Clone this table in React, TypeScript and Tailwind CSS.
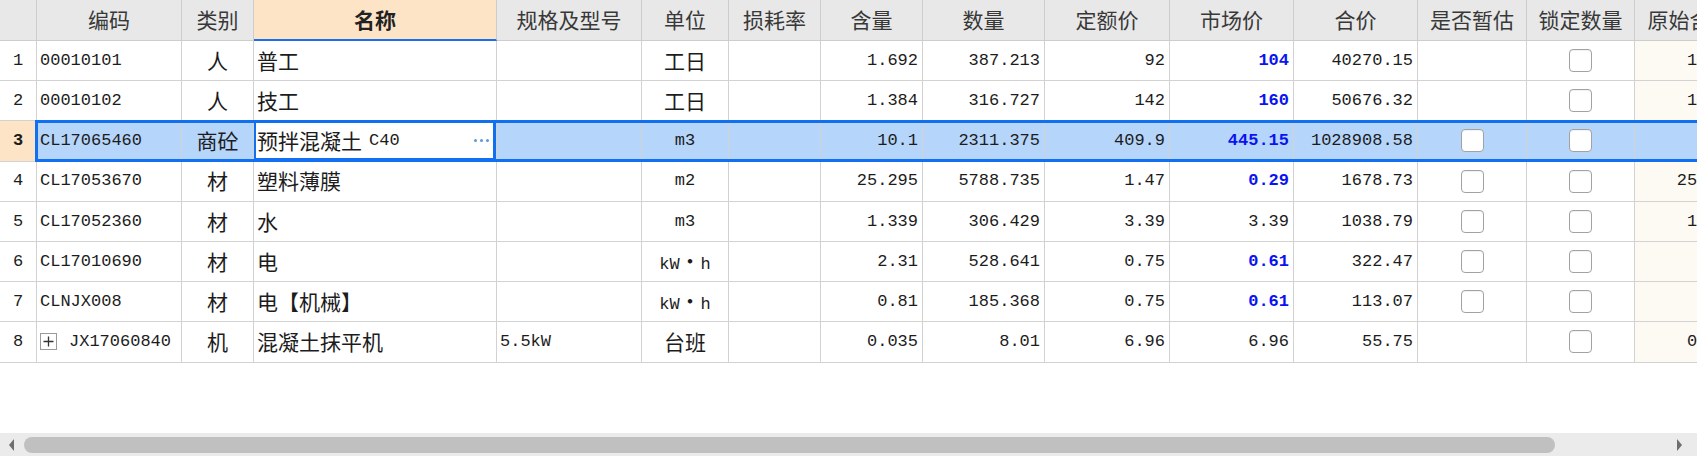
import type { ReactNode } from "react";

const MONO = "font-['Liberation_Mono','Noto_Sans_CJK_SC',monospace] text-[17px]";
const CJK = "font-['Noto_Sans_CJK_SC','Noto_Sans',sans-serif] text-[21px]";

type Col = {
  key: string;
  label: string;
  width: string;
  align: string;
  extra?: string;
};

const cols: Col[] = [
  { key: "code", label: "编码", width: "w-[145px]", align: "justify-start pl-[3px]" },
  { key: "type", label: "类别", width: "w-[72px]", align: "justify-center" },
  { key: "name", label: "名称", width: "w-[243px]", align: "justify-start pl-[3px]" },
  { key: "spec", label: "规格及型号", width: "w-[145px]", align: "justify-start pl-[3px]" },
  { key: "unit", label: "单位", width: "w-[87px]", align: "justify-center" },
  { key: "loss", label: "损耗率", width: "w-[92px]", align: "justify-end pr-[4px]" },
  { key: "qty", label: "含量", width: "w-[102px]", align: "justify-end pr-[4px]" },
  { key: "amount", label: "数量", width: "w-[122px]", align: "justify-end pr-[4px]" },
  { key: "quota", label: "定额价", width: "w-[125px]", align: "justify-end pr-[4px]" },
  { key: "market", label: "市场价", width: "w-[124px]", align: "justify-end pr-[4px]" },
  { key: "total", label: "合价", width: "w-[124px]", align: "justify-end pr-[4px]" },
  { key: "est", label: "是否暂估", width: "w-[109px]", align: "justify-center" },
  { key: "lock", label: "锁定数量", width: "w-[108px]", align: "justify-center" },
  { key: "orig", label: "原始含量", width: "w-[110px]", align: "justify-end pr-[6px]", extra: "bg-[#fdf9f3]" },
];

type Row = {
  code: string;
  expand?: boolean;
  type: string;
  name: ReactNode;
  spec: ReactNode;
  unit: ReactNode;
  qty: string;
  amount: string;
  quota: string;
  market: string;
  marketChanged: boolean;
  total: string;
  est: boolean;
};

const kwh = (
  <span className={MONO}>
    kW<span className={CJK}>・</span>h
  </span>
);

const rows: Row[] = [
  { code: "00010101", type: "人", name: "普工", spec: "", unit: "工日", qty: "1.692", amount: "387.213", quota: "92", market: "104", marketChanged: true, total: "40270.15", est: false },
  { code: "00010102", type: "人", name: "技工", spec: "", unit: "工日", qty: "1.384", amount: "316.727", quota: "142", market: "160", marketChanged: true, total: "50676.32", est: false },
  {
    code: "CL17065460", type: "商砼",
    name: (
      <span className="flex items-center">
        <span className={CJK}>预拌混凝土</span>
        <span className={`${MONO} ml-[7px]`}>C40</span>
      </span>
    ),
    spec: "", unit: <span className={MONO}>m3</span>, qty: "10.1", amount: "2311.375", quota: "409.9", market: "445.15", marketChanged: true, total: "1028908.58", est: true,
  },
  { code: "CL17053670", type: "材", name: "塑料薄膜", spec: "", unit: <span className={MONO}>m2</span>, qty: "25.295", amount: "5788.735", quota: "1.47", market: "0.29", marketChanged: true, total: "1678.73", est: true },
  { code: "CL17052360", type: "材", name: "水", spec: "", unit: <span className={MONO}>m3</span>, qty: "1.339", amount: "306.429", quota: "3.39", market: "3.39", marketChanged: false, total: "1038.79", est: true },
  { code: "CL17010690", type: "材", name: "电", spec: "", unit: kwh, qty: "2.31", amount: "528.641", quota: "0.75", market: "0.61", marketChanged: true, total: "322.47", est: true },
  { code: "CLNJX008", type: "材", name: "电【机械】", spec: "", unit: kwh, qty: "0.81", amount: "185.368", quota: "0.75", market: "0.61", marketChanged: true, total: "113.07", est: true },
  { code: "JX17060840", expand: true, type: "机", name: "混凝土抹平机", spec: <span className={MONO}>5.5kW</span>, unit: "台班", qty: "0.035", amount: "8.01", quota: "6.96", market: "6.96", marketChanged: false, total: "55.75", est: false },
];

function Checkbox() {
  return <div className="h-[23px] w-[23px] rounded-[4px] border border-[#a2a2a2] bg-white shadow-[inset_0_1px_1px_rgba(0,0,0,0.06)]" />;
}

function ExpandBox() {
  return (
    <svg width="17" height="17" viewBox="0 0 17 17" className="mr-[12px] shrink-0">
      <rect x="0.5" y="0.5" width="16" height="16" fill="#fff" stroke="#9a9a9a" />
      <path d="M3.5 8.5h10M8.5 3.5v10" stroke="#333" strokeWidth="1.3" />
    </svg>
  );
}

function text(v: ReactNode) {
  if (typeof v !== "string") return v;
  if (/[\u3000-\u9fff\uff00-\uffef]/.test(v)) return <span className={CJK}>{v}</span>;
  return <span className={MONO}>{v}</span>;
}

function cellContent(row: Row, key: string): ReactNode {
  switch (key) {
    case "code":
      return (
        <>
          {row.expand && <ExpandBox />}
          <span className={MONO}>{row.code}</span>
        </>
      );
    case "type":
      return text(row.type);
    case "name":
      return text(row.name);
    case "spec":
      return text(row.spec);
    case "unit":
      return text(row.unit);
    case "loss":
      return null;
    case "qty":
      return text(row.qty);
    case "amount":
      return text(row.amount);
    case "quota":
      return text(row.quota);
    case "market":
      return row.marketChanged ? (
        <span className={`${MONO} font-bold text-[#0a14f0]`}>{row.market}</span>
      ) : (
        text(row.market)
      );
    case "total":
      return text(row.total);
    case "est":
      return row.est ? <Checkbox /> : null;
    case "lock":
      return <Checkbox />;
    case "orig":
      return text(row.qty);
  }
  return null;
}

export default function App() {
  const selected = 2;

  return (
    <div className="flex h-[456px] w-[1697px] flex-col overflow-hidden bg-white text-[#1c1c1c]">
      <div className="flex h-[41px] shrink-0">
        <div className="h-full w-[37px] shrink-0 border-r border-b border-[#cdcdcd] bg-[#e8e8e8]" />
        {cols.map((c) =>
          c.key === "name" ? (
            <div
              key={c.key}
              className={`${c.width} flex h-full shrink-0 items-center justify-center border-r border-b-2 border-r-[#cdcdcd] border-b-[#1a6ff0] bg-[#fde4c6] font-['Noto_Sans_CJK_SC',sans-serif] text-[21px] font-bold text-[#222]`}
            >
              {c.label}
            </div>
          ) : (
            <div
              key={c.key}
              className={`${c.width} flex h-full shrink-0 items-center justify-center overflow-hidden whitespace-nowrap border-r border-b border-[#cdcdcd] bg-[#e8e8e8] font-['Noto_Sans_CJK_SC',sans-serif] text-[21px] text-[#383838]`}
            >
              {c.label}
            </div>
          )
        )}
      </div>

      {rows.map((row, i) => {
        const isSel = i === selected;
        return (
          <div key={row.code} className="relative flex h-[40.2px] shrink-0">
            <div
              className={`flex h-full w-[37px] shrink-0 items-center justify-center border-r border-b border-[#d2d2d2] ${
                isSel ? "bg-[#fde4c6] font-bold" : "bg-white"
              } ${MONO}`}
            >
              {i + 1}
            </div>
            {cols.map((c) => {
              const isCur = isSel && c.key === "name";
              const bg = isCur ? "bg-white" : isSel ? "bg-[#b5d5fb]" : c.extra ?? "bg-white";
              return (
                <div
                  key={c.key}
                  className={`${c.width} ${c.align} ${bg} relative flex h-full shrink-0 items-center overflow-hidden whitespace-nowrap border-r border-b border-[#d2d2d2]`}
                >
                  {cellContent(row, c.key)}
                  {isCur && (
                    <>
                      <div className="ml-auto mr-[7px] flex gap-[3px]">
                        <span className="h-[3px] w-[3px] rounded-full bg-[#5b9ad8]" />
                        <span className="h-[3px] w-[3px] rounded-full bg-[#5b9ad8]" />
                        <span className="h-[3px] w-[3px] rounded-full bg-[#5b9ad8]" />
                      </div>
                      <div className="pointer-events-none absolute -top-[1px] -left-[1px] right-0 bottom-0 border-[3px] border-[#1170f0]" />
                    </>
                  )}
                </div>
              );
            })}
            {isSel && (
              <div className="pointer-events-none absolute -top-[1px] bottom-0 left-[35px] right-[-20px] z-10 border-[3px] border-[#1170f0]" />
            )}
          </div>
        );
      })}

      <div className="flex-1" />

      <div className="flex h-[23px] shrink-0 items-center bg-[#ebebeb]">
        <svg width="24" height="16" viewBox="0 0 24 16" className="shrink-0">
          <path d="M14 2 L9 8 L14 14 Z" fill="#6e6e6e" />
        </svg>
        <div className="h-[16px] w-[1531px] shrink-0 rounded-full bg-[#c0c0c0]" />
        <div className="flex-1" />
        <svg width="24" height="16" viewBox="0 0 24 16" className="mr-[6px] shrink-0">
          <path d="M10 2 L15 8 L10 14 Z" fill="#6e6e6e" />
        </svg>
      </div>
    </div>
  );
}
